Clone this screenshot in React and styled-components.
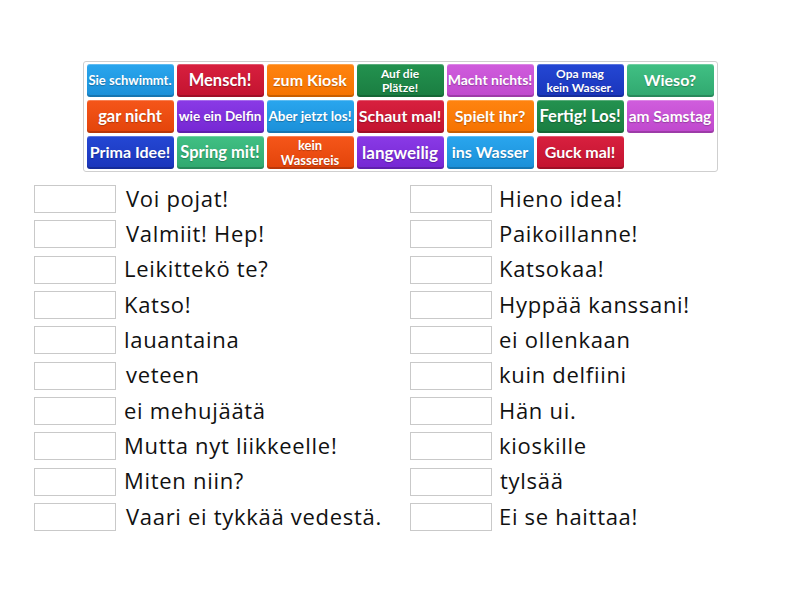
import React from 'react'
import styled, { createGlobalStyle } from 'styled-components';

const GlobalStyle = createGlobalStyle`
    body {
        margin: 0;
        background: #fff;
        font-family: "Open Sans", Lato, sans-serif;
    }
`;

const Page = styled.div`
    width: 800px;
    height: 600px;
    padding-top: 61px;
    box-sizing: border-box;
`;

const Bank = styled.div`
    width: 635px;
    margin: 0 auto;
    box-sizing: border-box;
    border: 1px solid #cfcfcf;
    border-radius: 3px;
    padding: 2px 3px;
    display: grid;
    grid-template-columns: repeat(7, 87px);
    grid-auto-rows: 33px;
    gap: 3px;
`;

const colors = {
    sky: ['#2aa6ee', '#1a8fd8'],
    red: ['#d8203f', '#c2132f'],
    orange: ['#ff8410', '#f57200'],
    green: ['#23924f', '#1a7d41'],
    pink: ['#d05ddd', '#bf48cd'],
    blue: ['#2447d4', '#1a35bb'],
    mint: ['#41c084', '#30a86f'],
    rust: ['#f5561a', '#e3440a'],
    purple: ['#8a3ae6', '#7527d3'],
};

const Tile = styled.div`
    display: flex;
    align-items: center;
    justify-content: center;
    text-align: center;
    color: #fff;
    font-family: Lato, "Open Sans", sans-serif;
    font-weight: 700;
    font-size: ${({ size }) => size}px;
    line-height: 1.15;
    border-radius: 3px;
    background: linear-gradient(${({ c }) => colors[c][0]}, ${({ c }) => colors[c][1]});
    box-shadow: inset 0 -2px 0 rgba(0, 0, 0, 0.18), inset 0 1px 0 rgba(255, 255, 255, 0.25);
    text-shadow: 0 1px 1px rgba(0, 0, 0, 0.25);
    white-space: nowrap;
    overflow: hidden;
`;

const Columns = styled.div`
    display: grid;
    grid-template-columns: 376px 376px;
    padding-left: 34px;
    margin-top: 13px;
`;

const Column = styled.div`
    display: flex;
    flex-direction: column;
    gap: 7.35px;
`;

const Row = styled.div`
    display: flex;
    align-items: center;
    height: 28px;
`;

const Slot = styled.div`
    width: 82px;
    height: 28px;
    box-sizing: border-box;
    border: 1px solid #c9c9c9;
    background: #fff;
    flex: none;
`;

const Label = styled.span`
    margin-left: ${({ shift }) => 9 + shift}px;
    margin-bottom: 3px;
    font-size: 22px;
    letter-spacing: 0.7px;
    color: #111;
    white-space: nowrap;
`;

const tiles = [
    ['Sie schwimmt.', 'sky', 13],
    ['Mensch!', 'red', 16.5],
    ['zum Kiosk', 'orange', 16],
    ['Auf die\nPlätze!', 'green', 12],
    ['Macht nichts!', 'pink', 14],
    ['Opa mag\nkein Wasser.', 'blue', 12],
    ['Wieso?', 'mint', 16],
    ['gar nicht', 'rust', 16.5],
    ['wie ein Delfin', 'purple', 13.5],
    ['Aber jetzt los!', 'sky', 13.5],
    ['Schaut mal!', 'red', 16],
    ['Spielt ihr?', 'orange', 16],
    ['Fertig! Los!', 'green', 16.5],
    ['am Samstag', 'pink', 15.5],
    ['Prima Idee!', 'blue', 16],
    ['Spring mit!', 'mint', 16.5],
    ['kein\nWassereis', 'rust', 13],
    ['langweilig', 'purple', 17],
    ['ins Wasser', 'sky', 16],
    ['Guck mal!', 'red', 16],
];

const left = [
    ['Voi pojat!', 1],
    ['Valmiit! Hep!', 1],
    ['Leikittekö te?', -1],
    ['Katso!', -1],
    ['lauantaina', -1],
    ['veteen', 1],
    ['ei mehujäätä', -1],
    ['Mutta nyt liikkeelle!', -1],
    ['Miten niin?', -1],
    ['Vaari ei tykkää vedestä.', 1],
];

const right = [
    ['Hieno idea!', -2],
    ['Paikoillanne!', -2],
    ['Katsokaa!', -2],
    ['Hyppää kanssani!', -2],
    ['ei ollenkaan', -2],
    ['kuin delfiini', -2],
    ['Hän ui.', -2],
    ['kioskille', -2],
    ['tylsää', -1],
    ['Ei se haittaa!', -2],
];

const List = ({ items }) => (
    <Column>
        {items.map(([text, shift]) => (
            <Row key={text}>
                <Slot />
                <Label shift={shift}>{text}</Label>
            </Row>
        ))}
    </Column>
);

const App = () => {
    return (
        <Page>
            <GlobalStyle />
            <Bank>
                {tiles.map(([text, c, size]) => (
                    <Tile key={text} c={c} size={size}>
                        <span>
                            {text.split('\n').map((line, i) => (
                                <React.Fragment key={i}>
                                    {i > 0 && <br />}
                                    {line}
                                </React.Fragment>
                            ))}
                        </span>
                    </Tile>
                ))}
            </Bank>
            <Columns>
                <List items={left} />
                <List items={right} />
            </Columns>
        </Page>
    )
}
export default App
